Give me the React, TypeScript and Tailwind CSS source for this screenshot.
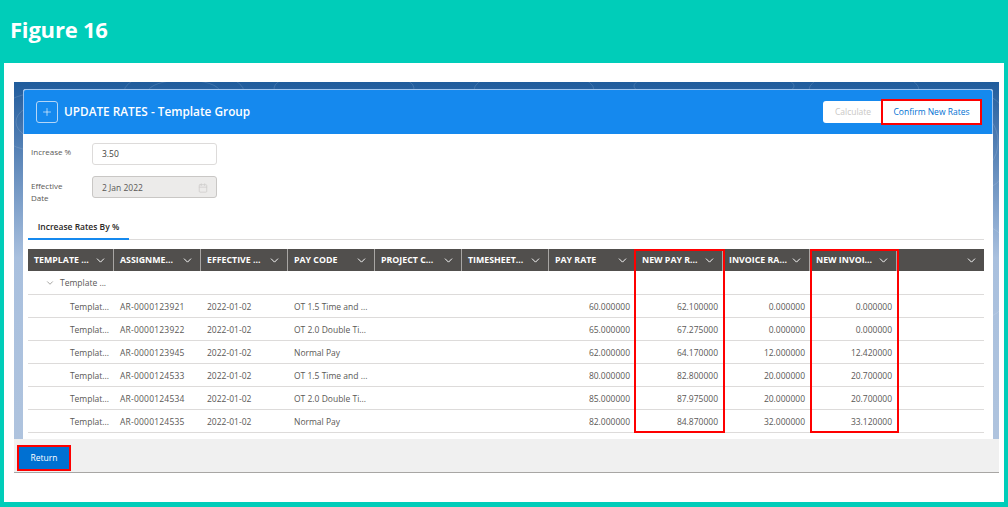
import { Calendar, ChevronDown, Plus } from "lucide-react"

const columns = [
  { label: "TEMPLATE ...", width: "w-[86px]" },
  { label: "ASSIGNME...", width: "w-[87px]" },
  { label: "EFFECTIVE ...", width: "w-[87px]" },
  { label: "PAY CODE", width: "w-[87px]" },
  { label: "PROJECT C...", width: "w-[87px]" },
  { label: "TIMESHEET...", width: "w-[87px]" },
  { label: "PAY RATE", width: "w-[87px]" },
  { label: "NEW PAY R...", width: "w-[87px]" },
  { label: "INVOICE RA...", width: "w-[87px]" },
  { label: "NEW INVOI...", width: "w-[87px]" },
  { label: "", width: "w-[87px]" },
]

const rows = [
  ["AR-0000123921", "OT 1.5 Time and ...", "60.000000", "62.100000", "0.000000", "0.000000"],
  ["AR-0000123922", "OT 2.0 Double Ti...", "65.000000", "67.275000", "0.000000", "0.000000"],
  ["AR-0000123945", "Normal Pay", "62.000000", "64.170000", "12.000000", "12.420000"],
  ["AR-0000124533", "OT 1.5 Time and ...", "80.000000", "82.800000", "20.000000", "20.700000"],
  ["AR-0000124534", "OT 2.0 Double Ti...", "85.000000", "87.975000", "20.000000", "20.700000"],
  ["AR-0000124535", "Normal Pay", "82.000000", "84.870000", "32.000000", "33.120000"],
]

function RatesTable() {
  return (
    <div className="relative mt-[9px] w-[956px] text-[8.5px] text-[#5a5856]">
      <div className="flex h-[22px] bg-[#514f4d] text-white">
        {columns.map((col, index) => (
          <div
            key={index}
            className={`${col.width} flex items-center justify-between border-r border-[#a8a6a4] px-[6px] pt-[1px] last:border-r-0`}
          >
            <span className="whitespace-nowrap text-[8.8px] font-bold">{col.label}</span>
            <ChevronDown className="h-[13px] w-[13px] shrink-0" strokeWidth={1.75} />
          </div>
        ))}
      </div>

      <div className="flex h-[24px] items-center border-b border-[#dddbda] pl-[17px] pt-[1px]">
        <ChevronDown className="h-[10px] w-[10px] text-[#706e6b]" strokeWidth={1.5} />
        <span className="ml-[5px]">Template ...</span>
      </div>

      {rows.map((row) => (
        <div key={row[0]} className="flex h-[23px] items-center border-b border-[#dddbda] pt-[2px] last:border-b-[2px] last:border-[#f3f2f2]">
          <div className="w-[86px] pr-[5px] text-right">Templat...</div>
          <div className="w-[87px] pl-[6px] tracking-[0.2px]">{row[0]}</div>
          <div className="w-[87px] pl-[6px]">2022-01-02</div>
          <div className="w-[87px] whitespace-nowrap pl-[6px]">{row[1]}</div>
          <div className="w-[174px]" />
          <div className="w-[87px] pr-[6px] text-right">{row[2]}</div>
          <div className="w-[87px] pr-[5px] text-right">{row[3]}</div>
          <div className="w-[87px] pr-[5px] text-right">{row[4]}</div>
          <div className="w-[87px] pr-[5px] text-right">{row[5]}</div>
        </div>
      ))}

      {/* annotation boxes from the figure */}
      <div className="absolute left-[606px] top-0 h-[184px] w-[91px] border-2 border-[#fe0000]" />
      <div className="absolute left-[782px] top-0 h-[184px] w-[89px] border-2 border-[#fe0000]" />
    </div>
  )
}

// faint contour lines behind the card
function Contours() {
  return (
    <svg className="absolute inset-0 h-full w-full" viewBox="0 0 985 391" fill="none" stroke="#ffffff" strokeOpacity="0.13" strokeWidth="1">
      <ellipse cx="30" cy="40" rx="50" ry="30" />
      <ellipse cx="30" cy="40" rx="28" ry="18" />
      <ellipse cx="170" cy="10" rx="60" ry="22" />
      <ellipse cx="170" cy="10" rx="36" ry="12" />
      <ellipse cx="330" cy="6" rx="70" ry="18" />
      <ellipse cx="520" cy="8" rx="60" ry="20" />
      <ellipse cx="700" cy="4" rx="80" ry="16" />
      <ellipse cx="850" cy="8" rx="55" ry="20" />
      <ellipse cx="960" cy="60" rx="40" ry="50" />
      <ellipse cx="960" cy="60" rx="24" ry="30" />
      <ellipse cx="975" cy="190" rx="22" ry="44" />
    </svg>
  )
}

export default function App() {
  return (
    <div className="flex h-[507px] w-[1008px] flex-col overflow-hidden bg-[#00cdb9] font-['Open_Sans',sans-serif]">
      <div className="flex h-[63px] shrink-0 items-center px-[10px] pb-[6px]">
        <h1 className="text-[22px] font-bold leading-none tracking-[-0.2px] text-white">Figure 16</h1>
      </div>

      <div className="mx-[4px] mb-[5px] flex-1 bg-white pl-[10px] pt-[19px]">
        <div className="relative flex h-[391px] w-[985px] flex-col bg-gradient-to-b from-[#1f5c9c] via-[#a9c0de] via-45% to-[#b0c4de]">
          <Contours />
          <div className="relative flex min-h-0 flex-1 flex-col pl-[9px] pr-[6px] pt-[7px]">
            <div className="flex-1 rounded-t-[3px] bg-white">
              <div className="flex h-[45px] items-center justify-between rounded-t-[3px] border border-b-0 border-[#9cc4f0] bg-[#1589ee] px-[12px]">
                <div className="flex items-center gap-[6px]">
                  <div className="flex h-[22px] w-[22px] items-center justify-center rounded-[3px] border border-[#b5d6f7] text-white">
                    <Plus className="h-[12px] w-[12px]" strokeWidth={1.25} />
                  </div>
                  <span className="text-[11.8px] font-semibold text-white">UPDATE RATES - Template Group</span>
                </div>
                <div className="flex h-[22px] text-[8.5px]">
                  <div className="flex w-[60px] items-center justify-center rounded-l-[3px] bg-white text-[#c9c7c5]">Calculate</div>
                  <div className="flex w-[97px] items-center justify-center bg-white text-[#0070d2] outline-2 outline-[#fe0000]">Confirm New Rates</div>
                </div>
              </div>

              <div className="px-[5px]">
                <div className="flex items-start pl-[3px] pt-[9px] text-[8px] text-[#5a5856]">
                  <div className="w-[61px] pt-[3px]">Increase %</div>
                  <div className="flex h-[22px] w-[125px] items-center rounded-[3px] border border-[#dddbda] bg-white pl-[9px] pt-[1px] text-[8.5px] text-[#3e3e3c]">3.50</div>
                </div>
                <div className="flex items-start pl-[3px] pt-[11px] text-[8px] leading-[12px] text-[#5a5856]">
                  <div className="w-[61px] pt-[4px]">
                    Effective
                    <br />
                    Date
                  </div>
                  <div className="flex h-[22px] w-[125px] items-center justify-between rounded-[3px] border border-[#c9c7c5] bg-[#ecebea] pl-[9px] pr-[8px] pt-[1px] text-[8.5px] text-[#5a5856]">
                    2 Jan 2022
                    <Calendar className="h-[10px] w-[10px] text-[#d0cecc]" />
                  </div>
                </div>

                <div className="mt-[11px] w-[956px] border-b border-[#dddbda]">
                  <div className="-mb-[1px] flex h-[25px] w-[101px] items-center justify-center border-b-2 border-[#1589ee] pt-[1px] text-[8.5px] font-semibold text-[#2b2826]">
                    Increase Rates By %
                  </div>
                </div>

                <RatesTable />
              </div>
            </div>
          </div>

          <div className="relative flex h-[34px] shrink-0 items-center border-b border-[#a8a6a4] bg-[#f0f0f0] pl-[5px] pt-[4px]">
            <button className="flex h-[22px] w-[50px] items-center justify-center bg-[#0070d2] pt-[1px] text-[8.5px] text-white outline-2 outline-[#fe0000]">
              Return
            </button>
          </div>
        </div>
      </div>
    </div>
  )
}
